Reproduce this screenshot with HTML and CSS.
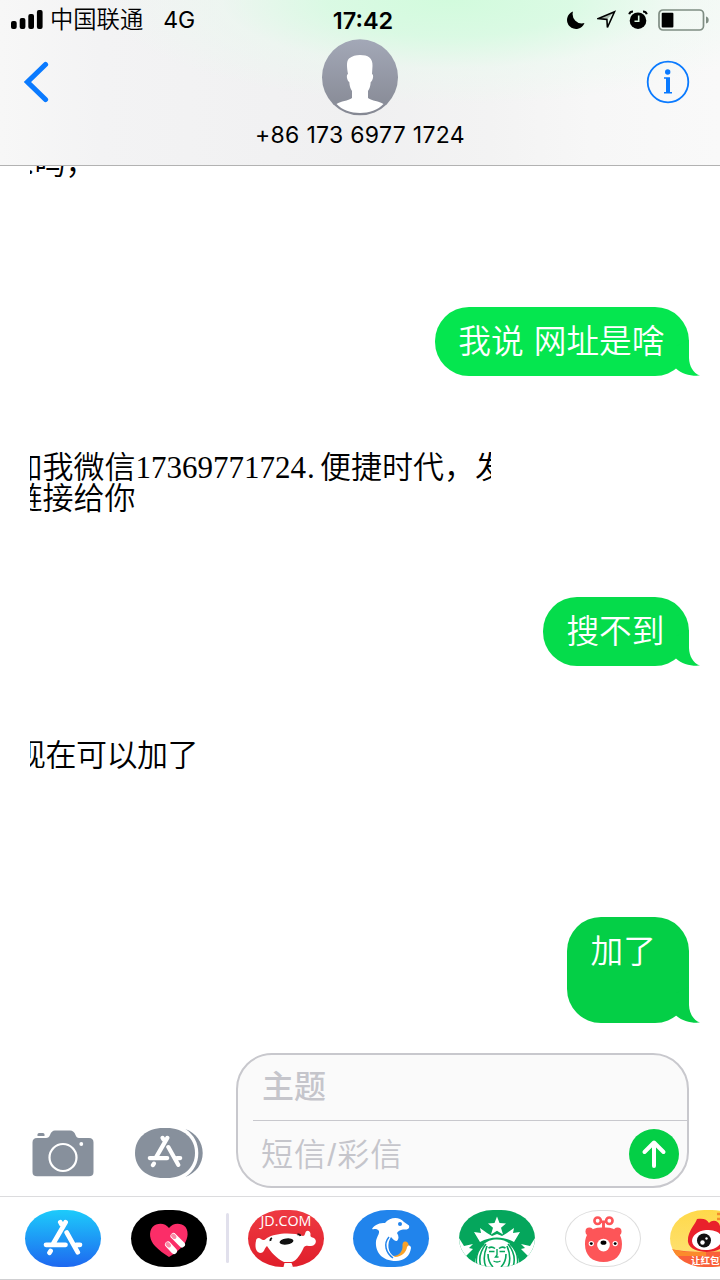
FILE: index.html
```html
<!DOCTYPE html>
<html lang="zh-CN">

<head>
  <meta charset="UTF-8">
  <meta name="viewport" content="width=device-width, initial-scale=1.0">
  <title>信息</title>
  <link rel="stylesheet" href="styles.css">
</head>

<body>
  <!-- 公用图形 -->
  <svg class="defs" width="0" height="0">
    <symbol id="tail" viewBox="0 -14 24 36">
      <path d="M13 -14V4C13.300 12 17 19 24 21.600C15 22.400 6 20 0 14.500V-8Z" />
    </symbol>
    <symbol id="appstore" viewBox="0 0 40 38">
      <g fill="none" stroke="#fff" stroke-width="4.700" stroke-linecap="round">
        <path d="M17.300 3.200L18.500 5.300M22.600 3.200L10.300 24.500M3 25.800H22.500M33.300 25.800H37M23.700 13.500L34.800 33.300M7.600 32L6.500 33.700" />
      </g>
    </symbol>
  </svg>

  <div class="phone">
    <header class="header">
      <div class="status">
        <div class="status-left">
          <svg class="signal" width="32" height="20" viewBox="0 0 32 20">
            <rect x="0" y="11" width="5.700" height="8" rx="2" />
            <rect x="8.700" y="8" width="5.700" height="11" rx="2" />
            <rect x="17.300" y="4" width="5.700" height="15" rx="2" />
            <rect x="25.900" y="0" width="5.700" height="19" rx="2" />
          </svg>
          <span class="carrier">中国联通</span>
          <span class="network">4G</span>
        </div>
        <div class="time">17:42</div>
        <div class="status-right">
          <svg width="18" height="18" viewBox="0 0 18 18">
            <path d="M6 .5A9 9 0 1 0 17.500 12A9.300 9.300 0 0 1 6 .5Z" />
          </svg>
          <svg class="location" width="20" height="20" viewBox="0 0 20 20">
            <path d="M1.500 8.600L17.500 1.800L10.400 17.500L9.900 9.500Z" fill="none" stroke="#000" stroke-width="1.600" />
            <path d="M17 2L9.800 9.600L1 8.800Z" fill-opacity=".25" />
          </svg>
          <svg class="alarm" width="20" height="20" viewBox="0 0 20 20">
            <circle cx="10" cy="10.700" r="8.300" />
            <path d="M1.200 4.200Q2 1.500 5 1.500M18.800 4.200Q18 1.500 15 1.500" fill="none" stroke="#000" stroke-width="2" />
            <path d="M10.700 5.500V11.300H6.500" fill="none" stroke="#dff9e6" stroke-width="1.600" />
          </svg>
          <svg class="battery" width="52" height="22" viewBox="0 0 52 22">
            <rect x="1" y="1" width="44.500" height="20" rx="4" fill="none" stroke="#7f8d83" stroke-width="1.700" />
            <path d="M48 7.500Q50.700 8 50.700 11T48 14.500Z" fill="#7f8d83" />
            <rect x="3.700" y="3.700" width="11.700" height="14.700" rx="1" />
          </svg>
        </div>
      </div>

      <div class="nav">
        <a href="javascript:;" class="back">
          <svg width="26" height="42" viewBox="0 0 26 42">
            <path d="M22.500 3.500L4.500 21L22.500 38.500" />
          </svg>
        </a>
        <div class="contact">
          <svg width="76" height="77" viewBox="0 0 76 77">
            <defs>
              <linearGradient id="avatar" x1="0" y1="0" x2="0" y2="1">
                <stop offset="0" stop-color="#a3a8b7" />
                <stop offset="1" stop-color="#858893" />
              </linearGradient>
            </defs>
            <circle cx="38" cy="38.300" r="38" fill="url(#avatar)" />
            <path d="M38 16C46 16 51 19 50.500 27L50 35C52.300 36 50.700 42 48.700 43C48.500 47 47.500 50 46 52V59C50 62 57 62 61.500 65C56 71 47 74 38 74S20 71 14.500 65C19 62 26 62 30 59V52C28.500 50 27.500 47 27.300 43C25.300 42 23.700 36 26 35C25 29 24 22 27 19.500C30 17 34 16 38 16Z" fill="#fff" />
          </svg>
          <div class="number">+86 173 6977 1724</div>
        </div>
        <a href="javascript:;" class="info">
          <svg width="44" height="44" viewBox="0 0 44 44">
            <circle cx="22" cy="22" r="20.300" fill="none" stroke="#0a7aff" stroke-width="1.800" />
            <circle cx="21.700" cy="12" r="2.700" />
            <path d="M18 17.300H24V32H26V33.500H18V32H20V18.800H18Z" />
          </svg>
        </a>
      </div>
    </header>

    <ul class="messages">
      <li class="item received first"><p>:吗，</p></li>
      <li class="item sent light">
        <div class="bubble">我说 网址是啥<svg class="tail"><use href="#tail" /></svg></div>
      </li>
      <li class="item received long"><p>加我微信17369771724<i>.</i>便捷时代，发<br>链接给你</p></li>
      <li class="item sent middle">
        <div class="bubble">搜不到<svg class="tail"><use href="#tail" /></svg></div>
      </li>
      <li class="item received short"><p>现在可以加了</p></li>
      <li class="item sent tall">
        <div class="bubble">加了<svg class="tail"><use href="#tail" /></svg></div>
      </li>
    </ul>

    <div class="compose">
      <svg class="camera" width="62" height="48" viewBox="0 0 62 48">
        <path d="M5.500 4.500Q5.500 3 7 3H11Q12.500 3 12.500 4.500V6H5.500Z" />
        <path d="M5 8H14Q17 8 18 5Q19.500 .5 23 .5H38Q42 .5 43.500 5Q44.500 8 47 8H57Q61.500 8 61.500 12.500V42Q61.500 46.300 57 46.300H5Q.5 46.300 .5 42V12.500Q.5 8 5 8Z" />
        <circle cx="31" cy="27.500" r="13.500" fill="none" stroke="#fff" stroke-width="2.200" />
        <circle cx="49.300" cy="14" r="1.900" fill="#fff" />
      </svg>
      <svg class="apps" width="68" height="50" viewBox="0 0 68 50">
        <path d="M28 0H32C48 0 60 10 60 25S48 50 32 50H28C12 50 0 40 0 25S12 0 28 0Z" />
        <path d="M50.500 1C61 5 67.700 14 67.700 25S61 45 50.500 49C59 43 63.300 35 63.300 25S59 7 50.500 1Z" />
        <use href="#appstore" x="12" y="7" width="36" height="34" />
      </svg>
      <div class="field">
        <div class="subject">主题</div>
        <div class="body">
          <span>短信/彩信</span>
          <svg width="50" height="50" viewBox="0 0 50 50">
            <circle cx="25" cy="25" r="25" fill="#04cf46" />
            <path d="M25 37V14.500M15.500 23L25 13.500L34.500 23" />
          </svg>
        </div>
      </div>
    </div>

    <div class="drawer">
      <div class="app store">
        <svg viewBox="0 0 76 57"><use href="#appstore" x="18" y="9" width="40" height="38" /></svg>
      </div>
      <div class="app touch">
        <svg viewBox="0 0 76 57">
          <path d="M38 18C42 12.500 50 12.500 54.500 17C58.500 23 56.500 31 51 37C47 41 43 44 38 47C33 44 28 40 24 36C18.500 30 17.500 22 21.500 17C26 12.500 34 12.500 38 18Z" fill="#fb2d68" />
          <path d="M42.500 26L51 34.500M37 34.500L43 41" stroke="#fff" stroke-width="6" stroke-linecap="round" />
          <path d="M42 25.500L43.500 27M36.500 34L38 35.500" stroke="#f98aa6" stroke-width="4" stroke-linecap="round" />
        </svg>
      </div>
      <div class="line"></div>
      <div class="app jd">
        <svg viewBox="0 0 76 57">
          <text x="12.500" y="16" textLength="51" lengthAdjust="spacingAndGlyphs">JD.COM</text>
          <path d="M8 31C8 28 11 27 13 29C15 31 17 30 19 28C27 23 44 22 55 26C57 26 57 23 58 21.500C60 19.500 63 22 62.500 25C62 27 64 27 66 28C70 31 67 36 63 36C60 36 58 35 56 37C52 46 47 52 43 52H36C28 48 23 42 19 36C16 38 17 43 12 43C7 42 7 35 8 31Z" fill="#fff" />
          <path d="M36.500 53H43.500L45 57H35.500Z" fill="#fff" />
          <ellipse cx="38.500" cy="31.500" rx="7" ry="3" transform="rotate(-8 38.500 31.500)" fill="#111" />
          <path d="M22.500 31Q22 29 24 28M49.500 24.500Q52 24 52.500 26" fill="none" stroke="#111" stroke-width="1.800" />
        </svg>
      </div>
      <div class="app ctrip">
        <svg viewBox="0 0 76 57">
          <path d="M40 46C46 46 50 41 49.500 36C49 32 52 30 55 33L56 36C56 43 49 49 42 48Z" fill="#f7a229" />
          <path d="M19 19C22 14 27 13 32 13C37 7 46 6 51 12L56 15.500C57 19 54 20 50 19.500C47 20 45 21 44 23C46 26 46 29 44 31C41 31 40 29 38 27C34 33 34 43 42 47C49 46.500 53.500 42 54 37C55 34.500 58 35 58 38C57 46 51 51 43 51C29 51 22 42 23 31C24 26 28 22 25 20C23 18 21 20 19 19Z" fill="#fff" />
          <circle cx="47" cy="14" r="2" fill="#2184ec" />
          <path d="M36 27C30 34 33 43 40 48" fill="none" stroke="#2184ec" stroke-width="1.500" />
        </svg>
      </div>
      <div class="app coffee">
        <svg viewBox="0 0 76 57">
          <g fill="#fff">
            <path d="M38 6.500L40.500 13L47 13.500L42 17.800L44 24.500L38 20.800L32 24.500L34 17.800L29 13.500L35.500 13Z" />
            <path d="M15 22L22 23L21 18L28 23L33 26L38 24L43 26L48 23L55 18L54 23L61 22L55 32C44 26 32 26 21 32Z" />
            <path d="M0 28L5 36L14 34L10 38L14 39L7 46L9 50H0ZM76 28L71 36L62 34L66 38L62 39L69 46L67 50H76Z" />
            <path d="M38 29.500C27 29.500 18 36 15 57H61C58 36 49 29.500 38 29.500Z" />
          </g>
          <g fill="none" stroke="#05a65c" stroke-width="1.600">
            <path d="M25 34Q15 43 18 57M27 34Q18 45 22 57M51 34Q61 43 58 57M49 34Q58 45 54 57" />
            <path d="M28 36Q23 48 27 57M48 36Q53 48 49 57M29 44Q29 52 34 57M47 44Q47 52 42 57" />
            <path d="M29.500 38Q33 36 36 38.500M40 38.500Q43 36 46.500 38M30 41.500H35.500M40.500 41.500H46" />
            <path d="M38 39V45L36.500 47H39.500M34.500 51Q38 53 41.500 51" stroke-width="1.400" />
          </g>
        </svg>
      </div>
      <div class="app bear">
        <svg viewBox="0 0 76 57">
          <g fill="#fd5558">
            <circle cx="24" cy="21" r="4" />
            <circle cx="53" cy="21" r="4" />
            <path d="M38.500 17C52 16 57.500 24 57.500 34C57.500 46 50 52.500 38.500 52.500S19.500 46 19.500 34C19.500 24 25 16 38.500 17Z" />
            <path d="M37 11H40V18H37Z" />
          </g>
          <g fill="none" stroke="#fd5558" stroke-width="2.700">
            <circle cx="32.500" cy="10" r="3.300" />
            <circle cx="44.500" cy="10" r="3.300" />
            <path d="M36 11H41" />
          </g>
          <g fill="#fff">
            <circle cx="38.500" cy="35" r="6.500" />
            <circle cx="26" cy="33.500" r="2.700" />
            <circle cx="50.500" cy="33.500" r="2.700" />
          </g>
          <ellipse cx="38.500" cy="32.500" rx="3" ry="2.200" />
          <circle cx="26" cy="33.500" r="1.500" />
          <circle cx="50.500" cy="33.500" r="1.500" />
        </svg>
      </div>
      <div class="app weibo">
        <svg viewBox="0 0 76 57">
          <path d="M0 39Q30 45 76 39V57H0Z" fill="#f9603a" />
          <path d="M0 39L16 42L36 42V46H0Z" fill="#fb8b2c" />
          <path d="M18 32C17 22 25 15 27 9C33 8 37 9 39 13C43 9 49 11 50 16C60 19 60 33 50 39C41 44 20 43 18 32Z" fill="#e9212b" />
          <ellipse cx="37" cy="30" rx="15" ry="10" transform="rotate(-6 37 30)" fill="#fff" />
          <circle cx="34" cy="30.500" r="7" fill="#111" />
          <circle cx="32.500" cy="32.500" r="2.200" fill="#fff" />
          <circle cx="36.500" cy="28.500" r="1.200" fill="#fff" />
          <path d="M47 4H50M47 9H50" stroke="#f48c2c" stroke-width="2.500" />
          <text x="21" y="53.500">让红包飞</text>
        </svg>
      </div>
    </div>
  </div>
</body>

</html>
```

FILE: styles.css
```css
* {
  box-sizing: border-box;
}

body {
  margin: 0;
  font-family: "Liberation Sans", "Noto Sans CJK SC", sans-serif;
  color: #000;
  background-color: #fff;
}

a {
  text-decoration: none;
}

ul,
p {
  padding: 0;
  margin: 0;
  list-style: none;
}

svg {
  display: block;
  flex-shrink: 0;
}

.defs {
  position: absolute;
}

.phone {
  display: flex;
  flex-direction: column;
  width: 720px;
  height: 1280px;
  overflow: hidden;
}

/* 顶部 */
.header {
  height: 166px;
  border-bottom: 1px solid #b2b2b2;
  background:
    radial-gradient(ellipse 350px 105px at 450px 0, #d2fbdd 0%, rgba(214, 251, 225, .85) 35%, rgba(232, 250, 238, .45) 65%, rgba(244, 248, 245, 0) 100%),
    linear-gradient(90deg, #f7f7f7 0, #f3f3f4 14%, #f0f0f1 50%, #f3f3f3 68%, #f7f7f7 82%, #f9f9f9 100%);
}

.status {
  display: grid;
  grid-template-columns: 1fr 80px 1fr;
  align-items: center;
  height: 39px;
  padding: 0 10px 0 11px;
}

.status-left,
.status-right {
  display: flex;
  align-items: center;
}

.status-right {
  justify-content: flex-end;
}

.carrier {
  margin-left: 7px;
  font-size: 23.300px;
  font-weight: 350;
  line-height: 40px;
}

.network {
  margin-left: 20px;
  font-family: Inter, sans-serif;
  font-size: 23px;
}

.time {
  padding-left: 5px;
  font-family: Inter, sans-serif;
  font-size: 23.500px;
  font-weight: 600;
  text-align: center;
}

.location {
  margin-left: 12px;
}

.alarm {
  margin-left: 11px;
}

.battery {
  margin-left: 10px;
}

.nav {
  display: grid;
  grid-template-columns: 1fr 240px 1fr;
  padding: 0 30px 0 23px;
}

.back {
  margin-top: 22px;
}

.back path {
  fill: none;
  stroke: #0a7aff;
  stroke-width: 5.200;
  stroke-linecap: round;
}

.contact {
  display: flex;
  flex-direction: column;
  align-items: center;
  margin-left: 3px;
  margin-right: -4px;
}

.number {
  margin-top: 4px;
  font-family: Inter, sans-serif;
  font-size: 23px;
  line-height: 30px;
  letter-spacing: .3px;
  white-space: nowrap;
}

.info {
  justify-self: end;
  margin-top: 21px;
  fill: #0a7aff;
}

/* 聊天内容 */
.messages {
  height: 874px;
}

.item {
  display: flex;
}

.received {
  width: 461px;
  margin-left: 30px;
  overflow: hidden;
}

.received p {
  margin-left: -18.500px;
  font-family: "Liberation Serif", "Noto Sans CJK SC", serif;
  font-size: 31px;
  font-weight: 350;
  line-height: 31px;
  white-space: nowrap;
}

.received i {
  display: inline-block;
  width: 14px;
  padding-left: 1px;
  font-style: normal;
}

.first {
  height: 18px;
}

.first p {
  margin: -18px 0 0 -4px;
}

.sent {
  justify-content: flex-end;
  padding-right: 31px;
}

.bubble {
  position: relative;
  height: 69px;
  padding: 0 24.500px 0 23.500px;
  border-radius: 34px;
  font-size: 32.700px;
  font-weight: 350;
  line-height: 70px;
  word-spacing: 1px;
  color: #fff;
  white-space: nowrap;
}

.tail {
  position: absolute;
  right: -11px;
  bottom: 0;
  width: 24px;
  height: 36px;
}

.light {
  margin-top: 123px;
}

.light .bubble {
  background-color: #05e64f;
}

.light .tail {
  fill: #05e64f;
}

.long {
  height: 70px;
  margin-top: 76px;
}

.middle {
  margin-top: 75px;
}

.middle .bubble {
  background-color: #05dc4b;
}

.middle .tail {
  fill: #05dc4b;
}

.short {
  height: 40px;
  margin-top: 74px;
}

.short p {
  margin-left: -15px;
  letter-spacing: -.5px;
}

.tall {
  margin-top: 137px;
}

.tall .bubble {
  width: 122px;
  height: 106px;
  background-color: #04cf46;
}

.tall .tail {
  fill: #04cf46;
}

/* 输入区 */
.compose {
  display: flex;
  align-items: flex-end;
  height: 156px;
  padding: 0 31px 8px 32px;
  fill: #87909c;
}

.camera {
  margin-bottom: 10px;
}

.apps {
  margin: 0 33px 10px 41px;
}

.field {
  flex: 1;
  height: 135px;
  padding-left: 15px;
  border: 2px solid #c8c8cd;
  border-radius: 36px;
  font-size: 32px;
  color: #c5c5cb;
  background-color: #fafafa;
}

.subject {
  height: 66px;
  padding-left: 9px;
  border-bottom: 1px solid #c8c8cd;
  font-weight: 500;
  line-height: 65px;
}

.body {
  display: flex;
  align-items: center;
  justify-content: space-between;
  height: 65px;
  padding: 0 8px;
  font-weight: 350;
  letter-spacing: 1.100px;
}

.body span {
  margin-top: -3px;
}

.body path {
  fill: none;
  stroke: #fff;
  stroke-width: 4;
  stroke-linecap: round;
  stroke-linejoin: round;
}

/* 底部应用栏 */
.drawer {
  display: flex;
  align-items: center;
  height: 84px;
  padding-left: 25px;
  border-top: 1px solid #dcdcde;
  border-bottom: 1px solid #cfcfd1;
}

.app {
  flex: none;
  width: 76px;
  height: 57px;
  margin-right: 29.700px;
  border-radius: 34px / 28.500px;
  overflow: hidden;
}

.line {
  flex: none;
  width: 3px;
  height: 50px;
  margin: 0 19px 0 -10px;
  border-radius: 2px;
  background-color: #e1e0ec;
}

.store {
  background: linear-gradient(#1dcbfb, #1e68f0);
}

.touch {
  margin-right: 29px;
  background-color: #000;
}

.jd {
  background: linear-gradient(#ee3a42, #e01f2b);
}

.jd text {
  font-family: "Open Sans", sans-serif;
  font-size: 14.500px;
  fill: #fff;
}

.ctrip {
  background-color: #2184ec;
}

.coffee {
  background-color: #05a65c;
}

.bear {
  border: 1px solid #dedede;
}

.weibo {
  background: linear-gradient(#ffd94a, #fde27a);
}

.weibo text {
  font-family: "Noto Sans CJK SC", sans-serif;
  font-size: 9.500px;
  font-weight: 700;
  fill: #fff;
}
```
